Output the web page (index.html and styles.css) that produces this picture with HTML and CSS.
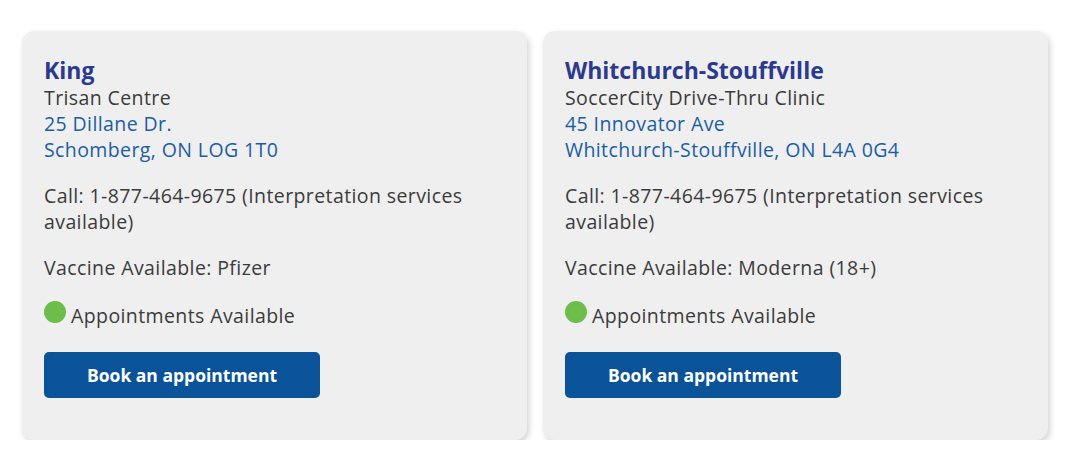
FILE: index.html
```html
<!DOCTYPE html>
<html lang="en">
<head>
<meta charset="utf-8">
<link rel="stylesheet" href="styles.css">
<title>Clinics</title>
</head>
<body>
<div class="grid">
  <div class="card">
    <h2 class="title">King</h2>
    <div class="name">Trisan Centre</div>
    <a class="addr" href="#">25 Dillane Dr.<br>Schomberg, ON LOG 1T0</a>
    <p class="info">Call: 1-877-464-9675 (Interpretation services available)</p>
    <p class="info">Vaccine Available: Pfizer</p>
    <p class="status"><span class="dot"></span>Appointments Available</p>
    <a class="btn" href="#">Book an appointment</a>
  </div>
  <div class="card">
    <h2 class="title">Whitchurch-Stouffville</h2>
    <div class="name">SoccerCity Drive-Thru Clinic</div>
    <a class="addr" href="#">45 Innovator Ave<br>Whitchurch-Stouffville, ON L4A 0G4</a>
    <p class="info">Call: 1-877-464-9675 (Interpretation services available)</p>
    <p class="info">Vaccine Available: Moderna (18+)</p>
    <p class="status"><span class="dot"></span>Appointments Available</p>
    <a class="btn" href="#">Book an appointment</a>
  </div>
</div>
</body>
</html>
```
FILE: styles.css
```css
* { box-sizing: border-box; }
html, body { margin: 0; padding: 0; background: #fff; }
body {
  font-family: "Open Sans", "Liberation Sans", sans-serif;
  color: #3b3b3b;
  font-size: 19.5px;
  letter-spacing: 0.4px;
  line-height: 26px;
}
.grid {
  display: grid;
  grid-template-columns: 505px 505px;
  gap: 16px;
  padding: 31px 0 0 22px;
}
.card {
  background: #efefef;
  border-radius: 12px;
  box-shadow: 2px 3px 6px rgba(0,0,0,0.18);
  padding: 25px 22px 43px;
  height: 409px;
}
.title {
  margin: 0;
  font-size: 23px;
  letter-spacing: 0;
  line-height: 29px;
  font-weight: 700;
  color: #2b3a8f;
}
.name { color: #3b3b3b; }
.addr {
  display: block;
  color: #1b5ea3;
  text-decoration: none;
}
.info { margin: 20px 0 0; }
.status {
  margin: 22px 0 0;
  display: flex;
  align-items: center;
  gap: 5px;
}
.dot {
  flex: none;
  width: 22px;
  height: 22px;
  border-radius: 50%;
  background: #6cbd4a;
  margin-top: -8px;
}
.btn {
  display: flex;
  justify-content: center;
  align-items: center;
  margin-top: 23px;
  width: 276px;
  height: 46px;
  border-radius: 5px;
  background: #0b5399;
  color: #fff;
  font-weight: 700;
  font-size: 17.5px;
  letter-spacing: 0;
  text-decoration: none;
}
```
